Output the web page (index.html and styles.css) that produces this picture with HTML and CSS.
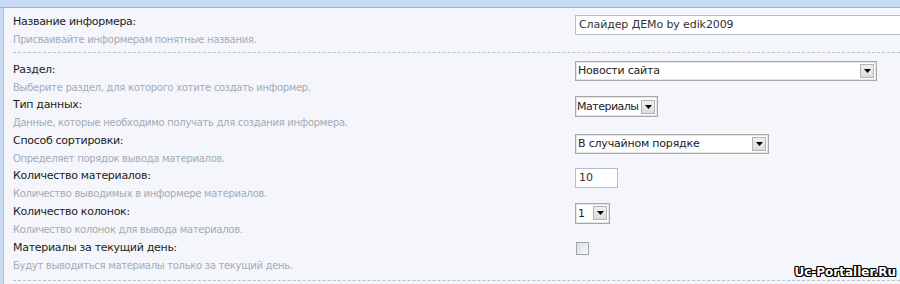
FILE: index.html
```html
<!DOCTYPE html>
<html lang="ru">
<head>
<meta charset="utf-8">
<title>Информер</title>
<link rel="stylesheet" href="styles.css">
</head>
<body>
<div class="page">
  <div class="topbar"></div>
  <div class="panel">
    <div class="group group-first">
      <div class="row">
        <div class="info">
          <div class="label">Название информера:</div>
          <div class="desc">Присваивайте информерам понятные названия.</div>
        </div>
        <div class="control control-first">
          <div class="textbox textbox-wide">Слайдер ДЕМо by edik2009</div>
        </div>
      </div>
    </div>
    <div class="group group-rest">
      <div class="row">
        <div class="info">
          <div class="label">Раздел:</div>
          <div class="desc">Выберите раздел, для которого хотите создать информер.</div>
        </div>
        <div class="control">
          <div class="select select-section"><span class="value">Новости сайта</span><span class="arrow"><svg width="7" height="4" viewBox="0 0 7 4"><path d="M0 0H7L3.5 4Z" fill="#000"/></svg></span></div>
        </div>
      </div>
      <div class="row">
        <div class="info">
          <div class="label">Тип данных:</div>
          <div class="desc">Данные, которые необходимо получать для создания информера.</div>
        </div>
        <div class="control">
          <div class="select select-type"><span class="value">Материалы</span><span class="arrow"><svg width="7" height="4" viewBox="0 0 7 4"><path d="M0 0H7L3.5 4Z" fill="#000"/></svg></span></div>
        </div>
      </div>
      <div class="row">
        <div class="info">
          <div class="label">Способ сортировки:</div>
          <div class="desc">Определяет порядок вывода материалов.</div>
        </div>
        <div class="control">
          <div class="select select-sort"><span class="value">В случайном порядке</span><span class="arrow"><svg width="7" height="4" viewBox="0 0 7 4"><path d="M0 0H7L3.5 4Z" fill="#000"/></svg></span></div>
        </div>
      </div>
      <div class="row">
        <div class="info">
          <div class="label">Количество материалов:</div>
          <div class="desc">Количество выводимых в информере материалов.</div>
        </div>
        <div class="control">
          <div class="textbox textbox-num">10</div>
        </div>
      </div>
      <div class="row">
        <div class="info">
          <div class="label">Количество колонок:</div>
          <div class="desc">Количество колонок для вывода материалов.</div>
        </div>
        <div class="control">
          <div class="select select-cols"><span class="value">1</span><span class="arrow"><svg width="7" height="4" viewBox="0 0 7 4"><path d="M0 0H7L3.5 4Z" fill="#000"/></svg></span></div>
        </div>
      </div>
      <div class="row">
        <div class="info">
          <div class="label">Материалы за текущий день:</div>
          <div class="desc">Будут выводиться материалы только за текущий день.</div>
        </div>
        <div class="control">
          <div class="checkbox"></div>
        </div>
      </div>
    </div>
  </div>
  <div class="watermark">Uc-Portaller.Ru</div>
</div>
</body>
</html>
```

FILE: styles.css
```css
html, body {
  margin: 0;
  padding: 0;
}
body {
  background: #f4f6fb;
  font-family: "DejaVu Sans", Tahoma, sans-serif;
  overflow: hidden;
}
.page {
  position: relative;
  width: 900px;
  height: 284px;
  overflow: hidden;
  background: linear-gradient(to right, #c9dbf3 0, #c9dbf3 3px, transparent 3px);
}
.topbar {
  height: 7px;
  background: #c6daf5;
  border-bottom: 1px solid #9fb3cf;
}
.panel {
  margin-left: 3px;
  border-left: 1px solid #a9c0e2;
  background: #f4f6fb;
  height: 276px;
  padding-left: 9px;
}
.group {
  border-bottom: 1px dashed #b9c3d0;
}
.group-first {
  padding-top: 5px;
  padding-bottom: 3px;
}
.group-rest {
  padding-top: 8px;
  padding-bottom: 6px;
}
.row {
  display: grid;
  grid-template-columns: 562px 1fr;
}
.label {
  font-size: 11px;
  line-height: 18px;
  letter-spacing: -0.3px;
  color: #1c1c1c;
}
.desc {
  font-size: 10px;
  line-height: 17.6px;
  letter-spacing: -0.3px;
  color: #a4abb5;
}
.control-first {
  padding-top: 2px;
}
.textbox {
  box-sizing: border-box;
  height: 20px;
  border: 1px solid #b5bdc9;
  background: #fff;
  font-size: 11px;
  line-height: 18px;
  letter-spacing: -0.1px;
  padding-left: 3px;
  color: #333;
}
.textbox-wide {
  width: 360px;
}
.textbox-num {
  width: 43px;
  margin-top: 1px;
}
.select {
  box-sizing: border-box;
  height: 20px;
  border: 1px solid #a7a7a7;
  box-shadow: inset 0 0 0 1px #e4e4e4;
  background: #fff;
  display: flex;
  align-items: center;
  justify-content: space-between;
  padding: 0 2px 0 2px;
  font-size: 11px;
  letter-spacing: -0.2px;
  color: #222;
}
.select .arrow {
  box-sizing: border-box;
  flex: none;
  width: 14px;
  height: 14px;
  border: 1px solid #b3b3b3;
  background: linear-gradient(#f0f0f0, #dcdcdc);
  display: flex;
  align-items: center;
  justify-content: center;
}
.select .arrow svg {
  display: block;
}
.select-section {
  width: 302px;
}
.select-type {
  width: 83px;
  height: 21px;
  padding-left: 1px;
  letter-spacing: -0.5px;
}
.select-sort {
  width: 194px;
  margin-top: 2px;
}
.select-cols {
  width: 35px;
  height: 21px;
  margin-top: 0;
}
.checkbox {
  box-sizing: border-box;
  width: 13px;
  height: 13px;
  margin-left: 1px;
  margin-top: 3px;
  border: 1px solid #9ea6b2;
  background: linear-gradient(135deg, #dcdcdc, #fafafa);
}
.watermark {
  position: absolute;
  right: 4px;
  bottom: 5px;
  font-family: "DejaVu Sans", sans-serif;
  font-weight: bold;
  font-size: 12px;
  color: #fff;
  text-shadow: 1px 0 0 #000, -1px 0 0 #000, 0 1px 0 #000, 0 -1px 0 #000,
               1px 1px 0 #000, -1px -1px 0 #000, 1px -1px 0 #000, -1px 1px 0 #000;
}
```
